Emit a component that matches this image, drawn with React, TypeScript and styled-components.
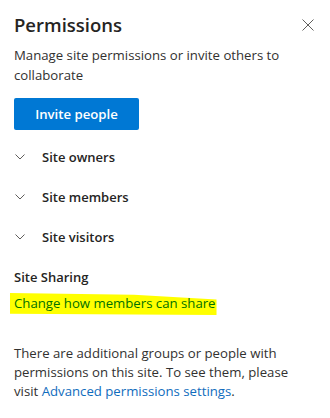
import React from 'react';
import styled, { createGlobalStyle } from 'styled-components';

const GlobalStyle = createGlobalStyle`
    html, body {
        margin: 0;
        padding: 0;
        background: #fff;
    }
    body {
        font-family: 'Segoe UI', 'Open Sans', 'Noto Sans', sans-serif;
        color: #323130;
        -webkit-font-smoothing: antialiased;
    }
`;

const Panel = styled.div`
    width: 330px;
    height: 418px;
    box-sizing: border-box;
    padding: 10px 16px 0 14px;
    display: flex;
    flex-direction: column;
    overflow: hidden;
`;

const Header = styled.div`
    display: flex;
    align-items: center;
    justify-content: space-between;
    height: 28px;
    margin-top: 1px;
`;

const Title = styled.h1`
    margin: 0;
    font-size: 18.5px;
    line-height: 28px;
    font-weight: 600;
    color: #252423;
`;

const CloseButton = styled.button`
    width: 20px;
    height: 20px;
    padding: 0;
    margin-right: -4px;
    border: none;
    background: transparent;
    display: flex;
    align-items: center;
    justify-content: center;
    color: #605e5c;
    cursor: pointer;
`;

const Description = styled.p`
    margin: 6px 0 0;
    width: 290px;
    font-size: 13.2px;
    line-height: 20px;
`;

const PrimaryButton = styled.button`
    margin-top: 13px;
    align-self: flex-start;
    width: 125px;
    height: 32px;
    border: none;
    border-radius: 2px;
    background: #0078d4;
    color: #fff;
    font-family: inherit;
    font-size: 13.2px;
    font-weight: 600;
    cursor: pointer;
`;

const GroupList = styled.div`
    margin-top: 7px;
    display: flex;
    flex-direction: column;
`;

const GroupRow = styled.div`
    height: 40px;
    display: flex;
    align-items: center;
    gap: 17px;
    padding-left: 1px;
    font-size: 13px;
    font-weight: 600;
    color: #252423;
`;

const Chevron = styled.svg`
    width: 10px;
    height: 6px;
    flex: none;
    color: #605e5c;
`;

const SectionLabel = styled.div`
    margin-top: 10px;
    font-size: 13px;
    line-height: 20px;
    font-weight: 600;
    color: #252423;
`;

const HighlightLink = styled.a`
    margin: 6px 0 0 -4px;
    align-self: flex-start;
    padding: 0 1px 1px 4px;
    font-size: 13.2px;
    line-height: 21px;
    color: #007000;
    background: #ffff00;
    text-decoration: none;
    clip-path: polygon(0 0, 60% 8%, 100% 30%, 100% 100%, 0 94%);
`;

const Note = styled.p`
    margin: 29px 0 0;
    width: 292px;
    font-size: 13.2px;
    line-height: 19px;
`;

const NoteLink = styled.a`
    color: #0f6cbd;
    text-decoration: none;
`;

const groups = ['Site owners', 'Site members', 'Site visitors'];

const App: React.FC = () => {
    return (
        <>
            <GlobalStyle />
            <Panel>
                <Header>
                    <Title>Permissions</Title>
                    <CloseButton aria-label="Close">
                        <svg width="12" height="12" viewBox="0 0 12 12">
                            <path d="M0.5 0.5 L11.5 11.5 M11.5 0.5 L0.5 11.5" stroke="currentColor" strokeWidth="1" fill="none" />
                        </svg>
                    </CloseButton>
                </Header>
                <Description>Manage site permissions or invite others to collaborate</Description>
                <PrimaryButton>Invite people</PrimaryButton>
                <GroupList>
                    {groups.map((g) => (
                        <GroupRow key={g}>
                            <Chevron viewBox="0 0 10 6">
                                <path d="M0.5 0.5 L5 5 L9.5 0.5" stroke="currentColor" strokeWidth="1" fill="none" />
                            </Chevron>
                            {g}
                        </GroupRow>
                    ))}
                </GroupList>
                <SectionLabel>Site Sharing</SectionLabel>
                <HighlightLink href="#">Change how members can share</HighlightLink>
                <Note>
                    There are additional groups or people with permissions on this site. To see them, please visit{' '}
                    <NoteLink href="#">Advanced permissions settings</NoteLink>.
                </Note>
            </Panel>
        </>
    );
};

export default App;
